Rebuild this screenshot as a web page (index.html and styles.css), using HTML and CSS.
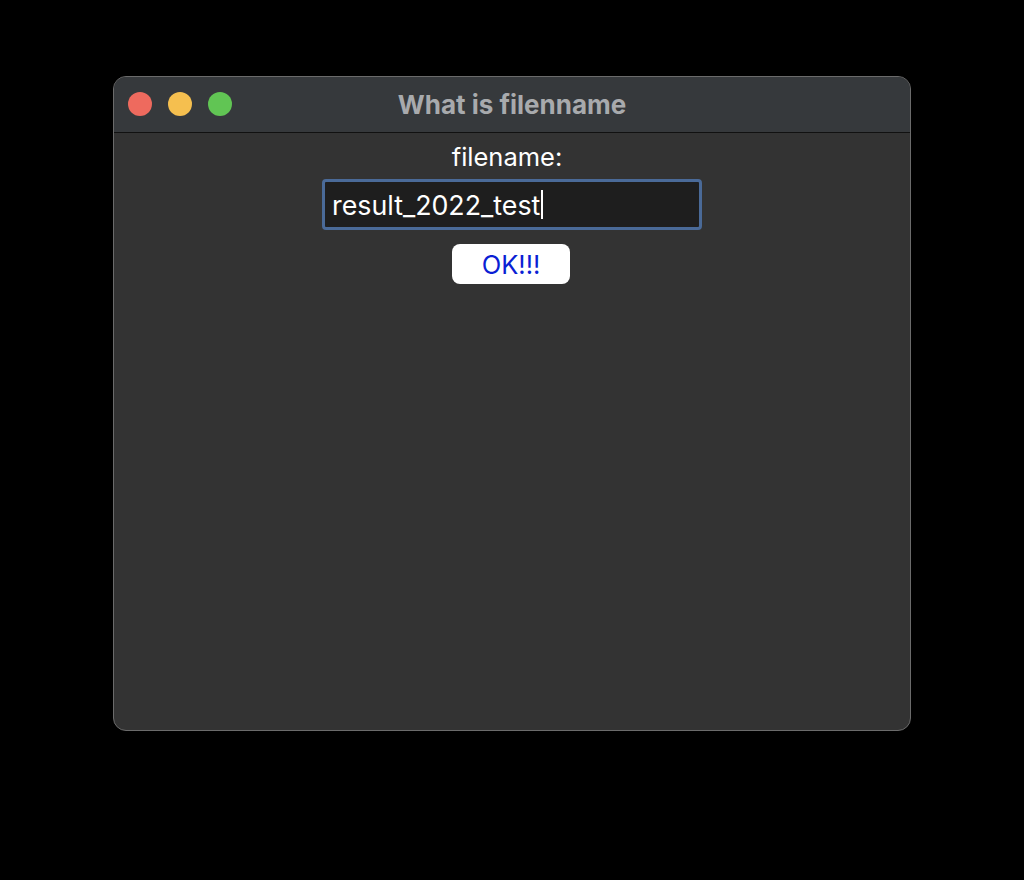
FILE: index.html
```html
<!DOCTYPE html>
<html>
<head>
<meta charset="utf-8">
<link rel="stylesheet" href="styles.css">
</head>
<body>
<div class="window">
  <div class="titlebar">
    <div class="lights">
      <span class="light red"></span>
      <span class="light yellow"></span>
      <span class="light green"></span>
    </div>
    <div class="title">What is filenname</div>
  </div>
  <div class="content">
    <div class="label">filename:</div>
    <div class="field"><span class="value">result_2022_test</span><span class="caret"></span></div>
    <button class="ok">OK!!!</button>
  </div>
</div>
</body>
</html>
```
FILE: styles.css
```css
html, body {
  margin: 0;
  padding: 0;
  background: #000;
  width: 1024px;
  height: 880px;
  overflow: hidden;
}
body {
  padding-top: 76px;
  padding-left: 113px;
  box-sizing: border-box;
  font-family: Inter, "Liberation Sans", Arial, sans-serif;
}
.window {
  width: 798px;
  height: 655px;
  box-sizing: border-box;
  border: 1px solid #6b6b6b;
  border-radius: 13px;
  background: #333333;
  overflow: hidden;
  display: flex;
  flex-direction: column;
}
.titlebar {
  height: 55px;
  background: #36393c;
  border-bottom: 1px solid #111;
  position: relative;
  display: flex;
  align-items: center;
  justify-content: center;
  flex-shrink: 0;
}
.lights {
  position: absolute;
  left: 14px;
  top: 15px;
  display: flex;
  gap: 16px;
}
.light {
  width: 24px;
  height: 24px;
  border-radius: 50%;
  display: block;
}
.red { background: #ee6a5e; }
.yellow { background: #f5bf4f; }
.green { background: #61c554; }
.title {
  font-weight: 700;
  font-size: 26px;
  color: #a8aaad;
  margin-top: -1px;
}
.content {
  display: flex;
  flex-direction: column;
  align-items: center;
  padding-top: 10px;
}
.label {
  color: #fff;
  font-size: 25.5px;
  line-height: 28px;
  margin-left: -10px;
}
.field {
  margin-top: 8px;
  width: 380px;
  height: 51px;
  box-sizing: border-box;
  border: 3px solid #4a6a98;
  border-radius: 4px;
  background: #1e1e1e;
  display: flex;
  align-items: center;
  padding-left: 7px;
  color: #fff;
  font-size: 26.8px;
}
.caret {
  display: inline-block;
  width: 2px;
  height: 29px;
  background: #fff;
  margin-left: 1px;
}
.ok {
  margin-top: 14px;
  width: 118px;
  height: 40px;
  border: none;
  border-radius: 8px;
  background: #fff;
  color: #0a1fd4;
  font-family: Inter, "Liberation Sans", Arial, sans-serif;
  font-size: 25.5px;
  padding: 0;
  margin-left: -2px;
}
```
